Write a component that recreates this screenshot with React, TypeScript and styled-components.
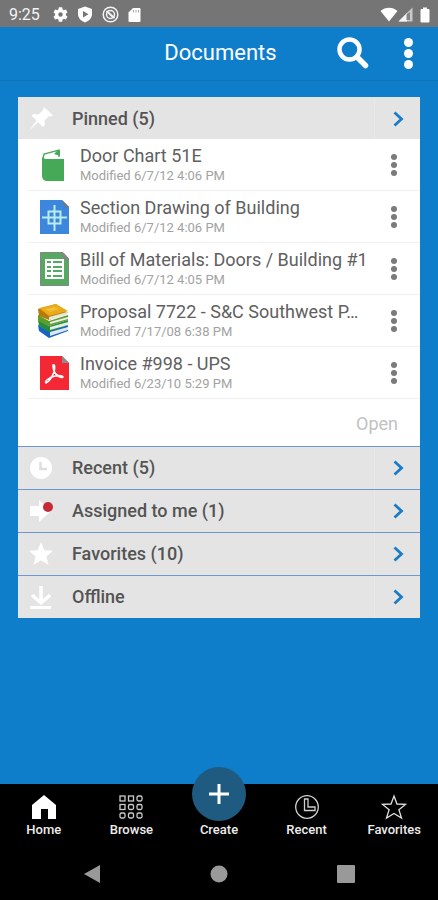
import React from "react";
import styled, { createGlobalStyle } from "styled-components";

const BLUE = "#0e7ecb";

const GlobalStyle = createGlobalStyle`
  * { box-sizing: border-box; }
  body {
    margin: 0;
    background: ${BLUE};
    font-family: Roboto, "Liberation Sans", sans-serif;
  }
  button {
    font: inherit;
    color: inherit;
    background: none;
    border: 0;
    padding: 0;
    cursor: pointer;
  }
  h1, h2, ul, p { margin: 0; padding: 0; }
  ul { list-style: none; }
  svg { display: block; }
`;

const Screen = styled.div`
  min-height: 100vh;
  display: flex;
  flex-direction: column;
`;

const StatusBar = styled.div`
  height: 27px;
  display: flex;
  align-items: center;
  justify-content: space-between;
  padding: 2px 8px 0 9px;
  background: #757575;
  color: #f4f4f4;
  font-size: 16px;
`;

const StatusGroup = styled.div<{ $gap: number }>`
  display: flex;
  align-items: center;
  gap: ${(p) => p.$gap}px;
`;

const Clock = styled.span`
  margin-right: 4px;
`;

const TitleBar = styled.header`
  height: 54px;
  display: grid;
  grid-template-columns: 1fr auto 1fr;
  align-items: center;
  padding: 0 24px 1px 27px;
  border-bottom: 1px solid #0d74bd;
  color: #fff;
`;

const Title = styled.h1`
  grid-column: 2;
  font-size: 22px;
  line-height: 28px;
  font-weight: 400;
`;

const TitleActions = styled.div`
  display: flex;
  align-items: center;
  justify-content: flex-end;
  gap: 34px;
`;

const Content = styled.main`
  flex: 1;
  padding: 16px 18px;
`;

const Card = styled.div`
  background: #fff;
`;

const SectionHeader = styled.button<{ $divided?: boolean }>`
  width: 100%;
  height: ${(p) => (p.$divided ? 43 : 42)}px;
  display: flex;
  align-items: center;
  padding: ${(p) => (p.$divided ? 0 : 2)}px 0 0 10px;
  background: #e4e4e4;
  border-top: ${(p) => (p.$divided ? "1px solid #6d98cd" : "0")};
  color: #545454;
  text-align: left;
`;

const SectionIcon = styled.span`
  width: 44px;
`;

const SectionTitle = styled.span`
  flex: 1;
  font-size: 18px;
  line-height: 22px;
  font-weight: 500;
`;

const ChevronCell = styled.span`
  width: 46px;
  align-self: stretch;
  display: grid;
  place-items: center;
  border-left: 1px solid #e9e9e9;
`;

const DocumentItem = styled.li`
  height: 52px;
  display: flex;
  align-items: center;
  margin-left: 9px;
  padding: 0 22px 0 9px;
  border-bottom: 1px solid #f0f0f0;
`;

const DocumentIcon = styled.span`
  width: 44px;
`;

const DocumentText = styled.div`
  flex: 1;
  min-width: 0;
`;

const DocumentName = styled.p`
  font-size: 18px;
  line-height: 22px;
  color: #606060;
  white-space: nowrap;
  overflow: hidden;
  text-overflow: ellipsis;
`;

const DocumentDate = styled.p`
  font-size: 13px;
  line-height: 18px;
  color: #a2a2a2;
`;

const OpenRow = styled.div`
  height: 47px;
  display: flex;
  align-items: center;
  justify-content: flex-end;
  padding: 2px 22px 0 0;
`;

const OpenButton = styled.button`
  font-size: 18px;
  line-height: 22px;
  color: #c2c2c2;
`;

const TabBar = styled.nav`
  height: 63px;
  display: grid;
  grid-template-columns: repeat(5, 1fr);
  grid-template-rows: minmax(0, 1fr);
  background: #000;
`;

const Tab = styled.button`
  min-height: 0;
  display: flex;
  flex-direction: column;
  align-items: center;
  justify-content: flex-end;
  gap: 1px;
  padding-bottom: 9px;
  color: #ededed;
  font-size: 13px;
  line-height: 16px;
  font-weight: 500;
`;

const CreateCircle = styled.span`
  flex: none;
  width: 54px;
  height: 54px;
  display: grid;
  place-items: center;
  border-radius: 50%;
  background: #1f5b80;
`;

const SystemBar = styled.div`
  height: 53px;
  display: flex;
  justify-content: space-around;
  align-items: center;
  padding: 0 29px;
  background: #000;
`;

const Dots = ({ r, gap, color }: { r: number; gap: number; color: string }) => (
  <svg width={2 * r + 2} height={2 * gap + 2 * r + 2} fill={color} aria-hidden="true">
    {[0, 1, 2].map((i) => (
      <circle key={i} cx={r + 1} cy={r + 1 + i * gap} r={r} />
    ))}
  </svg>
);

const Chevron = () => (
  <svg width="16" height="16" fill="none" stroke="#1a7cc6" strokeWidth="2.8" aria-hidden="true">
    <path d="M4.5 1.5 11.5 8l-7 6.5" />
  </svg>
);

const GearIcon = () => (
  <svg width="15" height="15" viewBox="2 2 20 20" fill="#fff" aria-hidden="true">
    <path d="M19.14 12.94c.04-.3.06-.61.06-.94s-.02-.64-.07-.94l2.03-1.58a.49.49 0 0 0 .12-.61l-1.92-3.32a.49.49 0 0 0-.59-.22l-2.39.96a7 7 0 0 0-1.62-.94l-.36-2.54a.48.48 0 0 0-.48-.41h-3.84a.47.47 0 0 0-.47.41l-.36 2.54c-.59.24-1.13.57-1.62.94l-2.39-.96a.48.48 0 0 0-.59.22L2.74 8.87a.47.47 0 0 0 .12.61l2.03 1.58c-.05.3-.09.63-.09.94s.02.64.07.94l-2.03 1.58a.49.49 0 0 0-.12.61l1.92 3.32c.12.22.37.29.59.22l2.39-.96c.5.38 1.03.7 1.62.94l.36 2.54c.05.24.24.41.48.41h3.84c.24 0 .44-.17.47-.41l.36-2.54a7 7 0 0 0 1.62-.94l2.39.96c.22.08.47 0 .59-.22l1.92-3.32a.47.47 0 0 0-.12-.61zM12 15a3 3 0 1 1 0-6 3 3 0 0 1 0 6z" />
  </svg>
);

const ShieldIcon = () => (
  <svg width="16" height="17" viewBox="0 0 16 17" aria-hidden="true">
    <path d="M8 .5 15 3v5c0 4-3 7-7 8.5C4 15 1 12 1 8V3z" fill="#fff" />
    <path d="m6 5 5.5 3.2L6 11.5z" fill="#757575" />
  </svg>
);

const SyncOffIcon = () => (
  <svg width="17" height="17" viewBox="0 0 17 17" fill="none" stroke="#f4f4f4" aria-hidden="true">
    <circle cx="8.5" cy="8.5" r="7.3" strokeWidth="1.5" />
    <circle cx="8.5" cy="8.5" r="4" strokeWidth="1.5" />
    <path d="m4.5 5 8 7M7 7.5l3 3" strokeWidth="1.7" />
  </svg>
);

const CardIcon = () => (
  <svg width="13" height="16" viewBox="0 0 13 16" aria-hidden="true">
    <path d="M5 1h6.5q1 0 1 1v12q0 1-1 1h-10q-1 0-1-1V5.5z" fill="#fff" />
    <path d="M5.5 3v2.5M8 3v2.5M10.5 3v2.5" stroke="#aaa" />
  </svg>
);

const WifiIcon = () => (
  <svg width="18" height="15" viewBox="0 0 18 15" aria-hidden="true">
    <path d="M.5 4C5-.5 13-.5 17.5 4L9 14.5z" fill="#fff" />
  </svg>
);

const SignalIcon = () => (
  <svg width="15" height="15" viewBox="0 0 15 15" aria-hidden="true">
    <path d="M14.5.5v14H.5z" fill="#c9c9c9" />
    <path d="M9 6v8.5H.5z" fill="#f4f4f4" />
    <path d="M8.5 7.5 12 5v8H8.5z" fill="#858585" />
  </svg>
);

const BatteryIcon = () => (
  <svg width="10" height="16" viewBox="0 0 10 16" fill="#fff" aria-hidden="true">
    <path d="M3 .5h4V2h1.5q1 0 1 1v11.5q0 1-1 1h-7q-1 0-1-1V3q0-1 1-1H3z" />
  </svg>
);

const SearchIcon = () => (
  <svg width="32" height="32" viewBox="0 0 32 32" fill="none" stroke="#fff" aria-hidden="true">
    <circle cx="12.5" cy="12.5" r="10" strokeWidth="4.5" />
    <path d="m20 20 8.5 8.5" strokeWidth="5.5" strokeLinecap="round" />
  </svg>
);

const PinIcon = () => (
  <svg width="26" height="26" viewBox="0 0 26 26" fill="#fff" aria-hidden="true">
    <path d="m16 1 9 8.5-2 1-2-.5-4.5 4.5.5 4.5-2 2-5-5L1 25l7.5-10.5-5-5 2-1.5 5 .5L15 4z" />
  </svg>
);

const ClockSolidIcon = () => (
  <svg width="26" height="26" viewBox="0 0 26 26" aria-hidden="true">
    <circle cx="13" cy="13" r="11" fill="#fff" />
    <path d="M12.5 7v7H19" fill="none" stroke="#dedede" strokeWidth="2.5" />
  </svg>
);

const AssignedIcon = () => (
  <svg width="26" height="26" viewBox="0 0 26 26" aria-hidden="true">
    <path d="M2 8h9V2l12 11-12 11v-6H2z" fill="#fff" />
    <circle cx="20" cy="9" r="5" fill="#c52b35" />
  </svg>
);

const StarSolidIcon = () => (
  <svg width="26" height="26" viewBox="0 0 26 26" fill="#fff" aria-hidden="true">
    <path d="m13 1 3.4 8.3 8.6.4-6.6 5.7L20.5 24 13 19.3 5.5 24l2.1-8.6L1 9.7l8.6-.4z" />
  </svg>
);

const DownloadIcon = () => (
  <svg width="26" height="26" viewBox="0 0 26 26" fill="none" stroke="#fff" aria-hidden="true">
    <path d="M13 2v16M4 11l9 8 9-8" strokeWidth="3.5" />
    <path d="M2 23.5h21" strokeWidth="3" />
  </svg>
);

const BookIcon = () => (
  <svg width="34" height="36" viewBox="0 0 34 36" aria-hidden="true">
    <path d="M7 12 8 7l15-4v7" fill="#fff" stroke="#46a957" strokeWidth="1.3" />
    <path d="m18 7 3-3 3-1v6z" fill="#46a957" />
    <path d="M6 10q2 2 4 2h18v22H10q-4-1-4-5z" fill="#46a957" />
  </svg>
);

const DrawingIcon = () => (
  <svg width="34" height="36" viewBox="0 0 34 36" fill="none" aria-hidden="true">
    <path d="M4 1h22l7 7v27H4z" fill="#3c86db" />
    <path d="M26 1l7 7h-4z" fill="#777" />
    <path d="M18.5 6v26M6 18.5h25" stroke="#b9edf0" strokeWidth="2" />
    <path d="M12.5 12.5h12v12h-12z" stroke="#b9edf0" strokeWidth="2" />
  </svg>
);

const SheetIcon = () => (
  <svg width="34" height="36" viewBox="0 0 34 36" aria-hidden="true">
    <path d="M4.5 1.5H27l5.5 6v27h-28z" fill="#56a961" stroke="#858585" />
    <path d="m26 1 7 7v3l-7-5z" fill="#858585" />
    <path d="M9 8h19v20H9z" fill="#fff" />
    <path d="M11 11h4M17 11h9M11 16h4M17 16h9M11 20h4M17 20h9M11 25h4M17 25h9" stroke="#56a961" strokeWidth="2" />
  </svg>
);

const BooksIcon = () => (
  <svg width="34" height="36" viewBox="0 0 34 36" strokeLinejoin="round" aria-hidden="true">
    <path d="m2 22 11 6 19-6v6l-19 7L3 28z" fill="#1764c5" />
    <path d="m14 29 18-5v3l-18 6z" fill="#dce8ef" />
    <path d="m2 17 11 6 19-6v5l-19 7-10-6z" fill="#268c42" />
    <path d="m14 24 18-5v3l-18 5z" fill="#e4eee2" />
    <path d="m2 12 11 6 19-6v5l-19 6-11-5z" fill="#5d9e28" />
    <path d="m14 19 18-5v2l-18 5z" fill="#eee" />
    <path d="M2 6 20 1l12 9-19 7L3 13z" fill="#b57b0a" />
    <path d="M3 5 20 1l12 7-19 5z" fill="#e9ab18" />
    <path d="m13 14 18-5v3l-18 5z" fill="#e9e6db" />
    <path d="m9 6 9-2 5 2-9 3z" fill="#f3bf32" />
  </svg>
);

const PdfIcon = () => (
  <svg width="34" height="36" viewBox="0 0 34 36" fill="none" aria-hidden="true">
    <path d="M4 1h22l7 7v27H4z" fill="#f42735" />
    <path d="M26 1l7 7h-7z" fill="#8b8b8b" />
    <path
      d="M17 10c2-1 2 3 1 7-2 5-5 10-8 11-2-1 3-6 9-7 5-1 8 0 8 1-1 2-8-2-9-6-1-3-1-5-1-6z"
      stroke="#fff"
      strokeWidth="1.6"
    />
  </svg>
);

const HomeIcon = () => (
  <svg width="28" height="28" viewBox="0 0 28 28" aria-hidden="true">
    <path d="M14 2 26 12v14h-8V16h-7v10H2V12z" fill="#fff" />
  </svg>
);

const BrowseIcon = () => (
  <svg width="28" height="28" viewBox="0 0 28 28" fill="none" stroke="#ccc" strokeWidth="1.3" aria-hidden="true">
    {[0, 1, 2].map((row) =>
      [0, 1, 2].map((col) => (
        <rect key={`${row}${col}`} x={3 + col * 8.5} y={3 + row * 8.5} width="5" height="5" rx={row + col > 1 ? 1.5 : 0} />
      ))
    )}
  </svg>
);

const PlusIcon = () => (
  <svg width="24" height="24" stroke="#fff" strokeWidth="3" aria-hidden="true">
    <path d="M12 2v20M2 12h20" />
  </svg>
);

const ClockIcon = () => (
  <svg width="28" height="28" viewBox="0 0 28 28" fill="none" stroke="#d0d0d0" strokeWidth="1.3" aria-hidden="true">
    <circle cx="14" cy="14" r="11.3" />
    <path d="M11.5 6H15v8h7v3.5H11.5z" />
  </svg>
);

const StarIcon = () => (
  <svg width="28" height="28" viewBox="0 0 28 28" fill="none" stroke="#e0e0e0" strokeWidth="1.3" aria-hidden="true">
    <path d="m14 3 3 8 8.5.4-6.6 5.4L21.5 25 14 20.5 6.5 25l2.6-8.2-6.6-5.4L11 11z" />
  </svg>
);

const documents = [
  { name: "Door Chart 51E", date: "Modified 6/7/12 4:06 PM", Icon: BookIcon },
  { name: "Section Drawing of Building", date: "Modified 6/7/12 4:06 PM", Icon: DrawingIcon },
  { name: "Bill of Materials: Doors / Building #1", date: "Modified 6/7/12 4:05 PM", Icon: SheetIcon },
  { name: "Proposal 7722 - S&C Southwest P…", date: "Modified 7/17/08 6:38 PM", Icon: BooksIcon },
  { name: "Invoice #998 - UPS", date: "Modified 6/23/10 5:29 PM", Icon: PdfIcon },
];

const sections = [
  { title: "Recent (5)", Icon: ClockSolidIcon },
  { title: "Assigned to me (1)", Icon: AssignedIcon },
  { title: "Favorites (10)", Icon: StarSolidIcon },
  { title: "Offline", Icon: DownloadIcon },
];

export default function App() {
  return (
    <Screen>
      <GlobalStyle />
      <StatusBar>
        <StatusGroup $gap={9}>
          <Clock>9:25</Clock>
          <GearIcon />
          <ShieldIcon />
          <SyncOffIcon />
          <CardIcon />
        </StatusGroup>
        <StatusGroup $gap={7}>
          <StatusGroup $gap={0}>
            <WifiIcon />
            <SignalIcon />
          </StatusGroup>
          <BatteryIcon />
        </StatusGroup>
      </StatusBar>
      <TitleBar>
        <Title>Documents</Title>
        <TitleActions>
          <button type="button" aria-label="Search"><SearchIcon /></button>
          <button type="button" aria-label="More options"><Dots r={4.5} gap={11} color="#fff" /></button>
        </TitleActions>
      </TitleBar>
      <Content>
        <Card>
          <SectionHeader type="button">
            <SectionIcon><PinIcon /></SectionIcon>
            <SectionTitle>Pinned (5)</SectionTitle>
            <ChevronCell><Chevron /></ChevronCell>
          </SectionHeader>
          <ul>
            {documents.map(({ name, date, Icon }) => (
              <DocumentItem key={name}>
                <DocumentIcon><Icon /></DocumentIcon>
                <DocumentText>
                  <DocumentName>{name}</DocumentName>
                  <DocumentDate>{date}</DocumentDate>
                </DocumentText>
                <button type="button" aria-label={`Options for ${name}`}>
                  <Dots r={3} gap={8} color="#7b7b7b" />
                </button>
              </DocumentItem>
            ))}
          </ul>
          <OpenRow><OpenButton type="button">Open</OpenButton></OpenRow>
          {sections.map(({ title, Icon }) => (
            <SectionHeader type="button" key={title} $divided>
              <SectionIcon><Icon /></SectionIcon>
              <SectionTitle>{title}</SectionTitle>
              <ChevronCell><Chevron /></ChevronCell>
            </SectionHeader>
          ))}
        </Card>
      </Content>
      <TabBar>
        <Tab type="button"><HomeIcon />Home</Tab>
        <Tab type="button"><BrowseIcon />Browse</Tab>
        <Tab type="button"><CreateCircle><PlusIcon /></CreateCircle>Create</Tab>
        <Tab type="button"><ClockIcon />Recent</Tab>
        <Tab type="button"><StarIcon />Favorites</Tab>
      </TabBar>
      <SystemBar>
        <button type="button" aria-label="Back">
          <svg width="18" height="20" fill="#999"><path d="M17 1v18L1 10z" /></svg>
        </button>
        <button type="button" aria-label="Home screen">
          <svg width="18" height="18" fill="#999"><circle cx="9" cy="9" r="8.5" /></svg>
        </button>
        <button type="button" aria-label="Overview">
          <svg width="18" height="18" fill="#999"><rect width="18" height="18" rx="1" /></svg>
        </button>
      </SystemBar>
    </Screen>
  );
}
